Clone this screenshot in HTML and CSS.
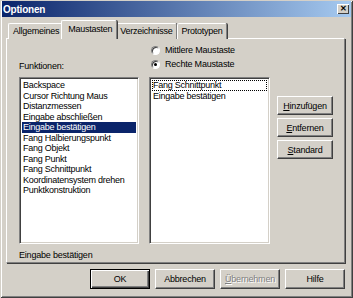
FILE: index.html
```html
<!DOCTYPE html>
<html lang="de">
<head>
    <meta charset="UTF-8">
    <title>Optionen</title>
    <link rel="stylesheet" href="styles.css">
</head>
<body>
    <div class="window">
        <div class="titlebar">
            <span class="title">Optionen</span>
            <span class="close">&#x2715;</span>
        </div>

        <div class="content">
            <div class="tabs">
                <div class="tab tab-first">Allgemeines</div>
                <div class="tab active">Maustasten</div>
                <div class="tab">Verzeichnisse</div>
                <div class="tab">Prototypen</div>
            </div>

            <div class="panel">
                <div class="panel-top">
                    <div class="label-col">Funktionen:</div>
                    <div class="radios">
                        <div class="radio-row"><span class="radio"></span>Mittlere Maustaste</div>
                        <div class="radio-row"><span class="radio checked"></span>Rechte Maustaste</div>
                    </div>
                </div>

                <div class="lists">
                    <ul class="listbox list-left">
                        <li>Backspace</li>
                        <li>Cursor Richtung Maus</li>
                        <li>Distanzmessen</li>
                        <li>Eingabe abschließen</li>
                        <li class="selected">Eingabe bestätigen</li>
                        <li>Fang Halbierungspunkt</li>
                        <li>Fang Objekt</li>
                        <li>Fang Punkt</li>
                        <li>Fang Schnittpunkt</li>
                        <li>Koordinatensystem drehen</li>
                        <li>Punktkonstruktion</li>
                    </ul>
                    <ul class="listbox list-right">
                        <li class="focused">Fang Schnittpunkt</li>
                        <li>Eingabe bestätigen</li>
                    </ul>
                    <div class="side-buttons">
                        <button class="btn"><u>H</u>inzufügen</button>
                        <button class="btn"><u>E</u>ntfernen</button>
                        <button class="btn"><u>S</u>tandard</button>
                    </div>
                </div>

                <div class="status">Eingabe bestätigen</div>
            </div>

            <div class="footer">
                <button class="btn btn-wide btn-default">OK</button>
                <button class="btn btn-wide">Abbrechen</button>
                <button class="btn btn-wide disabled"><u>Ü</u>bernehmen</button>
                <button class="btn btn-wide">Hilfe</button>
            </div>
        </div>
    </div>
</body>
</html>
```

FILE: styles.css
```css
* {
    margin: 0;
    padding: 0;
    box-sizing: border-box;
}

body {
    font-family: 'Liberation Sans', Arial, sans-serif;
    font-size: 9px;
    color: #000;
    background: #d4d0c8;
}

.window {
    width: 353px;
    height: 298px;
    background: #d4d0c8;
    padding: 1px 2px 2px 2px;
    box-shadow: inset 1px 1px #d4d0c8, inset -1px -1px #404040,
                inset 2px 2px #fff, inset -2px -2px #808080;
}

.titlebar {
    height: 16px;
    display: flex;
    align-items: center;
    justify-content: space-between;
    padding: 0 2px 0 1px;
    background: linear-gradient(to right, #0a246a, #a6caf0);
}

.title {
    color: #fff;
    font-weight: bold;
    font-size: 10px;
    letter-spacing: -0.2px;
}

.close {
    width: 12px;
    height: 10px;
    display: flex;
    align-items: center;
    justify-content: center;
    background: #d4d0c8;
    font-size: 8px;
    font-weight: bold;
    line-height: 1;
    box-shadow: inset 1px 1px #fff, inset -1px -1px #404040;
}

.content {
    padding: 0 6px 0 4px;
}

/* tab strip */
.tabs {
    display: flex;
    align-items: flex-end;
    height: 22px;
    padding-left: 2px;
    margin-bottom: -1px;
}

.tab {
    height: 16px;
    padding: 0 3px 0 4px;
    line-height: 15px;
    letter-spacing: -0.25px;
    border-top: 1px solid #fff;
    border-left: 1px solid #fff;
    border-right: 1px solid #808080;
    border-top-left-radius: 2px;
    border-top-right-radius: 2px;
    box-shadow: 1px 0 #404040;
    background: #d4d0c8;
}

.tab.active {
    position: relative;
    z-index: 2;
    height: 19px;
    margin: 0 -1px 0 -2px;
    padding: 0 4px 0 6px;
    line-height: 17px;
}

.tab.active + .tab {
    border-left: none;
}

/* tab page */
.panel {
    width: 339px;
    height: 225px;
    padding: 4px 0 0 12px;
    border-top: 1px solid #fff;
    border-left: 1px solid #fff;
    border-right: 1px solid #808080;
    border-bottom: 1px solid #808080;
    box-shadow: 1px 1px #404040;
}

.panel-top {
    display: flex;
    height: 34px;
}

.label-col {
    width: 130px;
    align-self: flex-end;
    padding-bottom: 5px;
    line-height: 11px;
    letter-spacing: -0.2px;
}

.radios {
    padding-left: 2px;
}

.radio-row {
    display: flex;
    align-items: center;
    height: 14px;
    letter-spacing: -0.2px;
}

.radio {
    width: 9px;
    height: 9px;
    margin-right: 5px;
    border-radius: 50%;
    border: 1px solid;
    border-color: #808080 #fff #fff #808080;
    background: #fff;
    box-shadow: inset 1px 1px #404040;
    display: flex;
    align-items: center;
    justify-content: center;
}

.radio.checked::after {
    content: "";
    width: 3px;
    height: 3px;
    border-radius: 50%;
    background: #000;
}

.lists {
    display: flex;
    height: 167px;
}

.listbox {
    list-style: none;
    height: 167px;
    padding: 2px 2px;
    background: #fff;
    border: 1px solid;
    border-color: #808080 #fff #fff #808080;
    box-shadow: inset 1px 1px #404040, inset -1px -1px #d4d0c8;
}

.listbox li {
    height: 10.5px;
    line-height: 10.5px;
    padding-left: 1px;
    white-space: nowrap;
    letter-spacing: -0.25px;
}

.list-left {
    width: 120px;
}

.list-right {
    width: 121px;
    margin-left: 10px;
}

.listbox li.selected {
    background: #0a246a;
    color: #fff;
}

.listbox li.focused {
    outline: 1px dotted #000;
    outline-offset: -1px;
}

.side-buttons {
    display: flex;
    flex-direction: column;
    gap: 3px;
    margin: 19px 0 0 7px;
}

.btn {
    width: 56px;
    height: 19px;
    font-family: inherit;
    font-size: 9px;
    letter-spacing: -0.2px;
    color: #000;
    background: #d4d0c8;
    border: 1px solid;
    border-color: #fff #404040 #404040 #fff;
    box-shadow: inset -1px -1px #808080;
}

.status {
    margin-top: 6px;
    line-height: 11px;
    letter-spacing: -0.2px;
}

.footer {
    display: flex;
    justify-content: flex-end;
    gap: 5px;
    margin-top: 6px;
}

.btn-wide {
    width: 60px;
    height: 20px;
}

.btn-default {
    border: 1px solid #000;
    box-shadow: inset 1px 1px #fff, inset -1px -1px #404040, inset -2px -2px #808080;
}

.btn.disabled {
    color: #808080;
    text-shadow: 1px 1px #fff;
}
```
